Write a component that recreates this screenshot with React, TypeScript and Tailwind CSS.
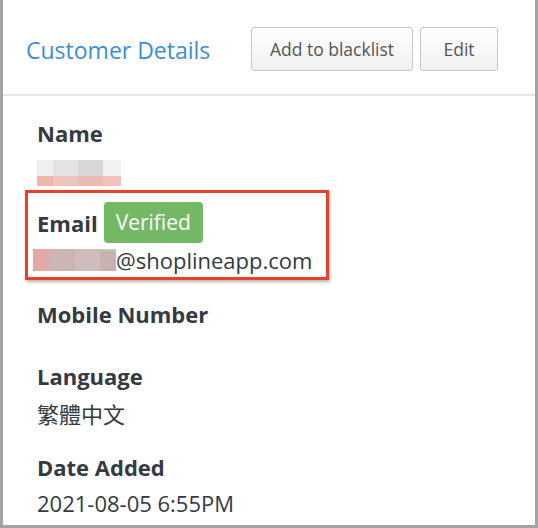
export default function App() {
  const font = { fontFamily: '"Open Sans", "Noto Sans CJK TC", sans-serif' };
  return (
    <div
      className="w-[538px] h-[528px] bg-white border-l-[3px] border-r-[3px] border-b-[3px] border-[#a3a3a3] overflow-hidden"
      style={font}
    >
      {/* Header */}
      <div className="h-[96px] flex items-center justify-between pl-[23px] pr-[37px] pt-[4px] border-b-2 border-[#e6e6e6]">
        <h1 className="text-[23px] text-[#3b8ede] mt-[2px]">Customer Details</h1>
        <div className="flex gap-[7px]">
          <button className="h-[44px] w-[162px] rounded-[3px] border border-[#c8c8c8] bg-gradient-to-b from-white to-[#f1f1f1] text-[17.5px] text-[#555]">
            Add to blacklist
          </button>
          <button className="h-[44px] w-[78px] rounded-[3px] border border-[#c8c8c8] bg-gradient-to-b from-white to-[#f1f1f1] text-[17.5px] text-[#555]">
            Edit
          </button>
        </div>
      </div>

      {/* Details */}
      <div className="pl-[22px] pt-[23px] text-[#343a43]">
        <div className="pl-[12px]">
          <div className="text-[22px] font-bold leading-[28px]">Name</div>
          <div className="mt-[13px] flex flex-col">
            <div className="flex h-[16px]">
              <span className="w-[16px] bg-[#eef0f0]" />
              <span className="w-[25px] bg-[#e1e3e5]" />
              <span className="w-[25px] bg-[#d5d7d9]" />
              <span className="w-[18px] bg-[#f0f1f1]" />
            </div>
            <div className="flex h-[10px]">
              <span className="w-[16px] bg-[#eeb7ae]" />
              <span className="w-[25px] bg-[#f0c4be]" />
              <span className="w-[25px] bg-[#ebbab3]" />
              <span className="w-[18px] bg-[#f0c4be]" />
            </div>
          </div>
        </div>

        <div className="mt-[4px] w-[304px] border-[3px] border-[#e8402a] shadow-[1px_2px_3px_rgba(0,0,0,0.3)] pl-[9px] pt-[9px] pb-[6px]">
          <div className="flex items-center gap-[6px]">
            <span className="text-[22px] font-bold leading-[28px]">Email</span>
            <span className="h-[41px] px-[12px] flex items-center rounded-[4px] bg-[#74b866] text-white text-[21px]">
              Verified
            </span>
          </div>
          <div className="mt-[6px] flex items-center -ml-[4px]">
            <div className="flex h-[22px]">
              <span className="w-[17px] bg-[#e5a9a5]" />
              <span className="w-[25px] bg-[#cbb5b5]" />
              <span className="w-[25px] bg-[#d0bcbc]" />
              <span className="w-[16px] bg-[#c9b1b0] border-t-[2px] border-[#b4d4b0]" />
            </div>
            <span className="text-[22px] leading-[22px]">@shoplineapp.com</span>
          </div>
        </div>

        <div className="pl-[12px]">
          <div className="mt-[20px] text-[22px] font-bold leading-[28px]">Mobile Number</div>
          <div className="mt-[34px] text-[22px] font-bold leading-[28px]">Language</div>
          <div className="mt-[10px] text-[22px] leading-[28px]">繁體中文</div>
          <div className="mt-[25px] text-[22px] font-bold leading-[28px]">Date Added</div>
          <div className="mt-[8px] text-[22px] leading-[28px]">2021-08-05 6:55PM</div>
        </div>
      </div>
    </div>
  );
}
